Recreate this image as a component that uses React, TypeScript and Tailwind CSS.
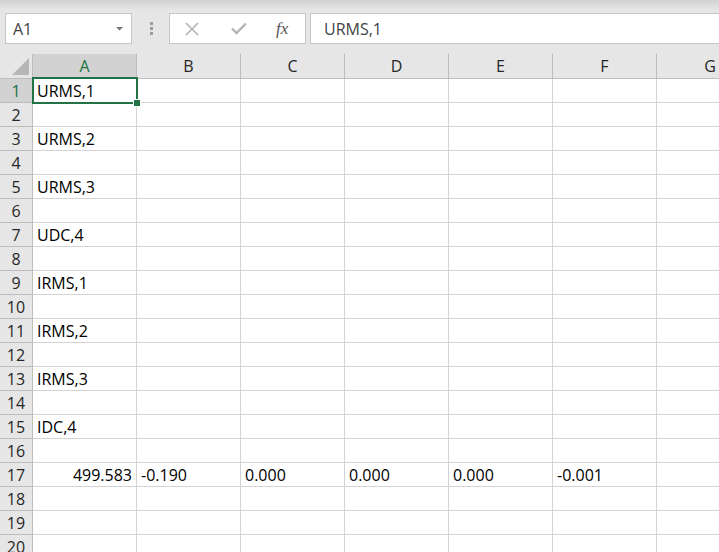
const COLS = ['A', 'B', 'C', 'D', 'E', 'F', 'G']

const CELLS: Record<string, string> = {
  'A1': 'URMS,1',
  'A3': 'URMS,2',
  'A5': 'URMS,3',
  'A7': 'UDC,4',
  'A9': 'IRMS,1',
  'A11': 'IRMS,2',
  'A13': 'IRMS,3',
  'A15': 'IDC,4',
  'A17': '499.583',
  'B17': '-0.190',
  'C17': '0.000',
  'D17': '0.000',
  'E17': '0.000',
  'F17': '-0.001',
}

const NUMERIC = new Set(['A17'])

function Toolbar() {
  return (
    <div className="h-[54px] flex items-start bg-[linear-gradient(to_bottom,#d2d2d2_0px,#e6e6e6_10px,#e6e6e6_100%)]">
      <div className="ml-[5px] mt-[13px] w-[127px] h-[31px] bg-white border border-[#c6c6c6] flex items-center justify-between pl-[7px] pr-[8px]">
        <span className="text-[16px] text-[#444]">A1</span>
        <svg width="7" height="4" viewBox="0 0 7 4"><path d="M0 0h7L3.5 3.5z" fill="#777" /></svg>
      </div>
      <div className="ml-[18px] mt-[22px] flex flex-col gap-[2px]">
        <span className="w-[3px] h-[3px] bg-[#9c9c9c]" />
        <span className="w-[3px] h-[3px] bg-[#9c9c9c]" />
        <span className="w-[3px] h-[3px] bg-[#9c9c9c]" />
      </div>
      <div className="ml-[16px] mt-[13px] w-[137px] h-[31px] bg-white border border-[#c6c6c6] flex items-center">
        <svg className="ml-[15px]" width="14" height="14" viewBox="0 0 14 14">
          <path d="M1 1L13 13M13 1L1 13" stroke="#b4b4b4" strokeWidth="1.6" />
        </svg>
        <svg className="ml-[32px]" width="16" height="13" viewBox="0 0 16 13">
          <path d="M1 6.5L5.5 11L15 1.5" stroke="#b4b4b4" strokeWidth="2.4" fill="none" />
        </svg>
        <span className="ml-[29px] text-[17px] italic text-[#555] font-['Liberation_Serif',serif] leading-none">fx</span>
      </div>
      <div className="ml-[4px] mt-[13px] flex-1 h-[31px] bg-white border border-[#c6c6c6] border-r-0 flex items-center pl-[13px]">
        <span className="text-[16px] text-[#444]">URMS,1</span>
      </div>
    </div>
  )
}

function HeaderRow() {
  return (
    <div className="flex h-[25px]">
      <div className="w-[33px] h-full bg-[#e6e6e6] border-r border-b border-[#bdbdbd] relative shrink-0">
        <svg className="absolute right-[3px] bottom-[3px]" width="17" height="17" viewBox="0 0 17 17">
          <path d="M17 0V17H0z" fill="#b6b6b6" />
        </svg>
      </div>
      {COLS.map(c => (
        <div key={c}
          className={c === 'A'
            ? 'w-[104px] shrink-0 h-full bg-[#d2d2d2] border-r border-b border-[#bdbdbd] flex items-center justify-center text-[16px] text-[#217346]'
            : c === 'G'
              ? 'flex-1 h-full bg-[#e6e6e6] border-b border-[#bdbdbd] flex items-center justify-center text-[16px] text-[#262626] pl-[44px]'
              : 'w-[104px] shrink-0 h-full bg-[#e6e6e6] border-r border-b border-[#bdbdbd] flex items-center justify-center text-[16px] text-[#262626]'}>
          {c}
        </div>
      ))}
    </div>
  )
}

function Row({ n }: { n: number }) {
  const sel = n === 1
  return (
    <div className="flex h-[24px]">
      <div className={sel
        ? 'w-[33px] shrink-0 h-full bg-[#d2d2d2] border-r border-b border-[#bdbdbd] flex items-center justify-center text-[16px] text-[#217346]'
        : 'w-[33px] shrink-0 h-full bg-[#e6e6e6] border-r border-b border-[#bdbdbd] flex items-center justify-center text-[16px] text-[#262626]'}>
        {n}
      </div>
      {COLS.map(c => {
        const key = `${c}${n}`
        const val = CELLS[key]
        return (
          <div key={c}
            className={`${c === 'G' ? 'flex-1' : 'w-[104px] shrink-0 border-r'} h-full border-b border-[#d4d4d4] relative flex items-center px-[4px] text-[16px] text-black whitespace-nowrap ${NUMERIC.has(key) ? 'justify-end' : ''}`}>
            {val}
            {key === 'A1' && (
              <div className="absolute z-10 -left-[1px] -top-[2px] -right-[2px] -bottom-[2px] border-2 border-[#217346]">
                <div className="absolute -right-[5px] -bottom-[5px] w-[8px] h-[8px] bg-[#217346] border border-white" />
              </div>
            )}
          </div>
        )
      })}
    </div>
  )
}

export default function App() {
  return (
    <div className="w-[719px] h-[552px] overflow-hidden bg-white font-['Open_Sans',sans-serif]">
      <Toolbar />
      <HeaderRow />
      {Array.from({ length: 20 }, (_, i) => <Row key={i} n={i + 1} />)}
    </div>
  )
}
